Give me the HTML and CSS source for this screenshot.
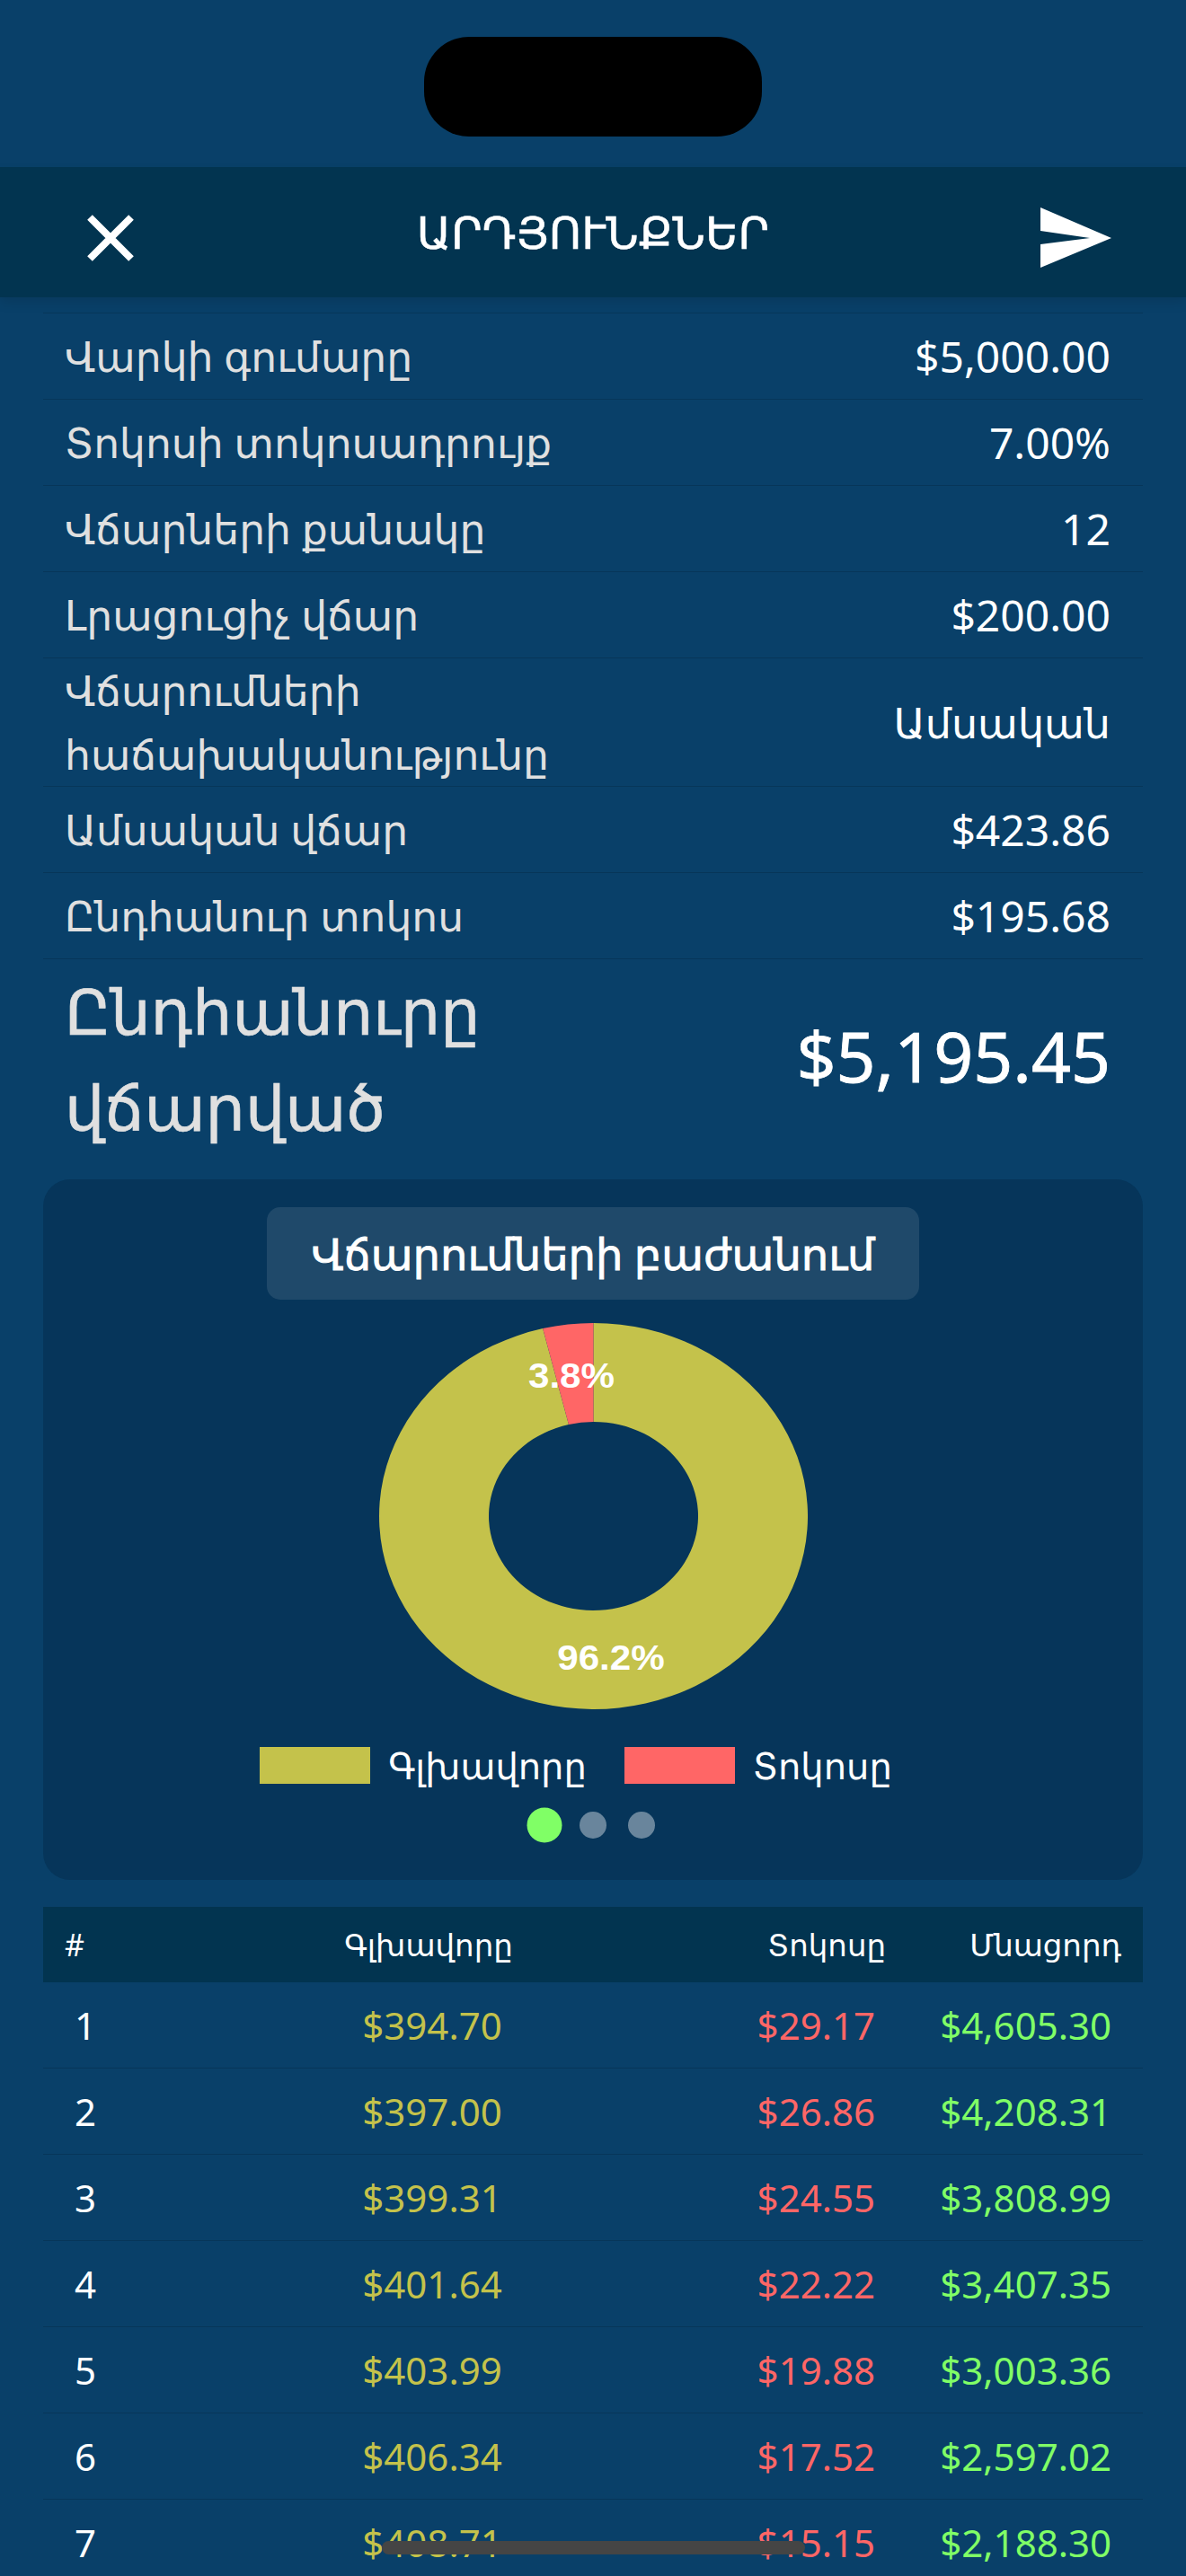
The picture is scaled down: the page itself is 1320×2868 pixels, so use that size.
FILE: index.html
```html
<!DOCTYPE html>
<html lang="hy">
<head>
  <meta charset="UTF-8">
  <title>Արդյունքներ</title>
  <link rel="stylesheet" href="styles.css">
</head>
<body>
  <div class="status-bar"><div class="island"></div></div>

  <header class="top-bar">
    <svg class="icon-close" viewBox="0 0 52 52"><path d="M3 3 L49 49 M49 3 L3 49"/></svg>
    <h1>ԱՐԴՅՈՒՆՔՆԵՐ</h1>
    <svg class="icon-send" viewBox="0 0 79 67"><path d="M0 0 L79 34 L0 67 V41 L55 34 L0 26 Z"/></svg>
  </header>

  <main class="content">
    <section class="summary">
      <div class="row"><span>Վարկի գումարը</span><b>$5,000.00</b></div>
      <div class="row"><span>Տոկոսի տոկոսադրույք</span><b>7.00%</b></div>
      <div class="row"><span>Վճարների քանակը</span><b>12</b></div>
      <div class="row"><span>Լրացուցիչ վճար</span><b>$200.00</b></div>
      <div class="row row-tall"><span>Վճարումների հաճախականությունը</span><b>Ամսական</b></div>
      <div class="row"><span>Ամսական վճար</span><b>$423.86</b></div>
      <div class="row"><span>Ընդհանուր տոկոս</span><b>$195.68</b></div>
      <div class="row row-total"><span>Ընդհանուրը վճարված</span><b>$5,195.45</b></div>
    </section>

    <section class="chart-card">
      <h2>Վճարումների բաժանում</h2>
      <svg class="donut" viewBox="0 0 477 430">
        <path class="slice-main" d="M238.5 0 A238.5 215 0 1 1 182.1 6.1 L210.95 112.98 A116.5 105 0 1 0 238.5 110 Z"/>
        <path class="slice-rate" d="M238.5 0 A238.5 215 0 0 0 182.1 6.1 L210.95 112.98 A116.5 105 0 0 1 238.5 110 Z"/>
        <text class="donut-label" transform="translate(214 72) scale(1.11 1)">3.8%</text>
        <text class="donut-label" transform="translate(258 386) scale(1.11 1)">96.2%</text>
      </svg>
      <div class="legend">
        <i class="swatch swatch-main"></i><span>Գլխավորը</span>
        <i class="swatch swatch-rate"></i><span>Տոկոսը</span>
      </div>
      <div class="dots"><i class="dot active"></i><i class="dot"></i><i class="dot"></i></div>
    </section>

    <section class="schedule">
      <div class="schedule-head">
        <span>#</span><span>Գլխավորը</span><span>Տոկոսը</span><span>Մնացորդ</span>
      </div>
      <div class="schedule-row"><span>1</span><span class="principal">$394.70</span><span class="interest">$29.17</span><span class="balance">$4,605.30</span></div>
      <div class="schedule-row"><span>2</span><span class="principal">$397.00</span><span class="interest">$26.86</span><span class="balance">$4,208.31</span></div>
      <div class="schedule-row"><span>3</span><span class="principal">$399.31</span><span class="interest">$24.55</span><span class="balance">$3,808.99</span></div>
      <div class="schedule-row"><span>4</span><span class="principal">$401.64</span><span class="interest">$22.22</span><span class="balance">$3,407.35</span></div>
      <div class="schedule-row"><span>5</span><span class="principal">$403.99</span><span class="interest">$19.88</span><span class="balance">$3,003.36</span></div>
      <div class="schedule-row"><span>6</span><span class="principal">$406.34</span><span class="interest">$17.52</span><span class="balance">$2,597.02</span></div>
      <div class="schedule-row"><span>7</span><span class="principal">$408.71</span><span class="interest">$15.15</span><span class="balance">$2,188.30</span></div>
    </section>
  </main>

  <div class="home-bar"></div>
</body>
</html>
```

FILE: styles.css
```css
html, body {
  margin: 0;
  padding: 0;
  height: 2868px;
  overflow: hidden;
  background: #094069;
  color: #fff;
  font-family: "Noto Sans", "DejaVu Sans", sans-serif;
}

.status-bar {
  height: 186px;
  display: flex;
  justify-content: center;
  padding-top: 41px;
  box-sizing: border-box;
}

.island {
  width: 376px;
  height: 111px;
  border-radius: 50px;
  background: #000;
}

.top-bar {
  height: 145px;
  background: #023450;
  box-shadow: 0 6px 12px rgba(0, 0, 0, 0.1);
  display: flex;
  align-items: center;
  justify-content: space-between;
  padding: 12px 83px 0 97px;
  box-sizing: border-box;
  position: relative;
}

.top-bar h1 {
  margin: 0;
  font-size: 50px;
  font-weight: 500;
  -webkit-text-stroke: 0.5px #fff;
  position: absolute;
  top: 38px;
  left: 0;
  right: 0;
  text-align: center;
}

.icon-close {
  width: 52px;
  height: 52px;
  fill: none;
  stroke: #fff;
  stroke-width: 8;
}

.icon-send {
  width: 79px;
  height: 67px;
  fill: #fff;
}

.content {
  padding: 17px 48px 0;
}

.summary {
  border-top: 1px solid rgba(0, 0, 0, 0.15);
}

.row {
  display: flex;
  justify-content: space-between;
  align-items: center;
  min-height: 95px;
  padding: 0 36px 0 24px;
  border-bottom: 1px solid rgba(0, 0, 0, 0.15);
  font-size: 48px;
}

.row span {
  color: #e0e0e0;
  max-width: 640px;
  font-size: 45.6px;
  line-height: 71px;
}

.row b {
  font-weight: 400;
}

.row-tall {
  min-height: 142px;
}

.row-tall b {
  font-size: 46px;
}

.row-total {
  border-bottom: 0;
  box-sizing: border-box;
  min-height: 245px;
  padding-bottom: 24px;
  font-size: 77px;
}

.row-total span {
  max-width: 520px;
  line-height: 107px;
  font-size: 70px;
  -webkit-text-stroke: 0.6px #e0e0e0;
}

.row-total b {
  margin-bottom: 6px;
  -webkit-text-stroke: 0.8px #fff;
}

.chart-card {
  background: #06355a;
  border-radius: 30px;
  height: 780px;
  display: flex;
  flex-direction: column;
  align-items: center;
  padding-top: 31px;
  box-sizing: border-box;
}

.chart-card h2 {
  margin: 0;
  width: 726px;
  height: 103px;
  box-sizing: border-box;
  background: rgba(255, 255, 255, 0.1);
  border-radius: 15px;
  font-size: 48px;
  font-weight: 500;
  -webkit-text-stroke: 0.8px #fff;
  text-align: center;
  line-height: 103px;
}

.donut {
  width: 477px;
  height: 430px;
  margin-top: 26px;
}

.slice-main { fill: #c4c24b; }
.slice-rate { fill: #ff6666; }

.donut-label {
  fill: #fff;
  font-family: "Liberation Sans", sans-serif;
  font-weight: 700;
  font-size: 38px;
  text-anchor: middle;
}

.legend {
  display: flex;
  align-items: center;
  margin-top: 42px;
  height: 41px;
  font-size: 40px;
}

.swatch {
  width: 123px;
  height: 41px;
}

.swatch-main { background: #c4c24b; }
.swatch-rate { background: #ff6666; }

.legend span {
  margin: 0 42px 0 20px;
}

.legend span:last-child {
  margin-right: 38px;
}

.dots {
  display: flex;
  align-items: center;
  gap: 24px;
  margin-top: 31px;
}

.dot {
  width: 30px;
  height: 30px;
  border-radius: 50%;
  background: rgba(255, 255, 255, 0.4);
}

.dot.active {
  background: #80ff66;
  transform: scale(1.3);
}

.schedule {
  margin-top: 30px;
}

.schedule-head {
  display: grid;
  grid-template-columns: 100px 610px 204px 1fr;
  align-items: center;
  height: 84px;
  padding: 0 24px 0 24px;
  background: #023450;
  font-size: 34px;
}

.schedule-head span:nth-child(2) { text-align: center; }
.schedule-head span:nth-child(3),
.schedule-head span:nth-child(4) { text-align: right; }

.schedule-row {
  display: grid;
  grid-template-columns: 94px 678px 154px 1fr;
  align-items: center;
  height: 95px;
  padding-right: 35px;
  border-bottom: 1px solid rgba(0, 0, 0, 0.15);
  font-size: 42px;
}

.schedule-row span:nth-child(1),
.schedule-row span:nth-child(2) { text-align: center; }
.schedule-row span:nth-child(3),
.schedule-row span:nth-child(4) { text-align: right; }

.principal { color: #c4c24b; }
.interest { color: #ff6666; }
.balance { color: #80ff66; }

.home-bar {
  position: absolute;
  left: 425px;
  top: 2829px;
  width: 471px;
  height: 15px;
  border-radius: 8px;
  background: #454545;
}
```
